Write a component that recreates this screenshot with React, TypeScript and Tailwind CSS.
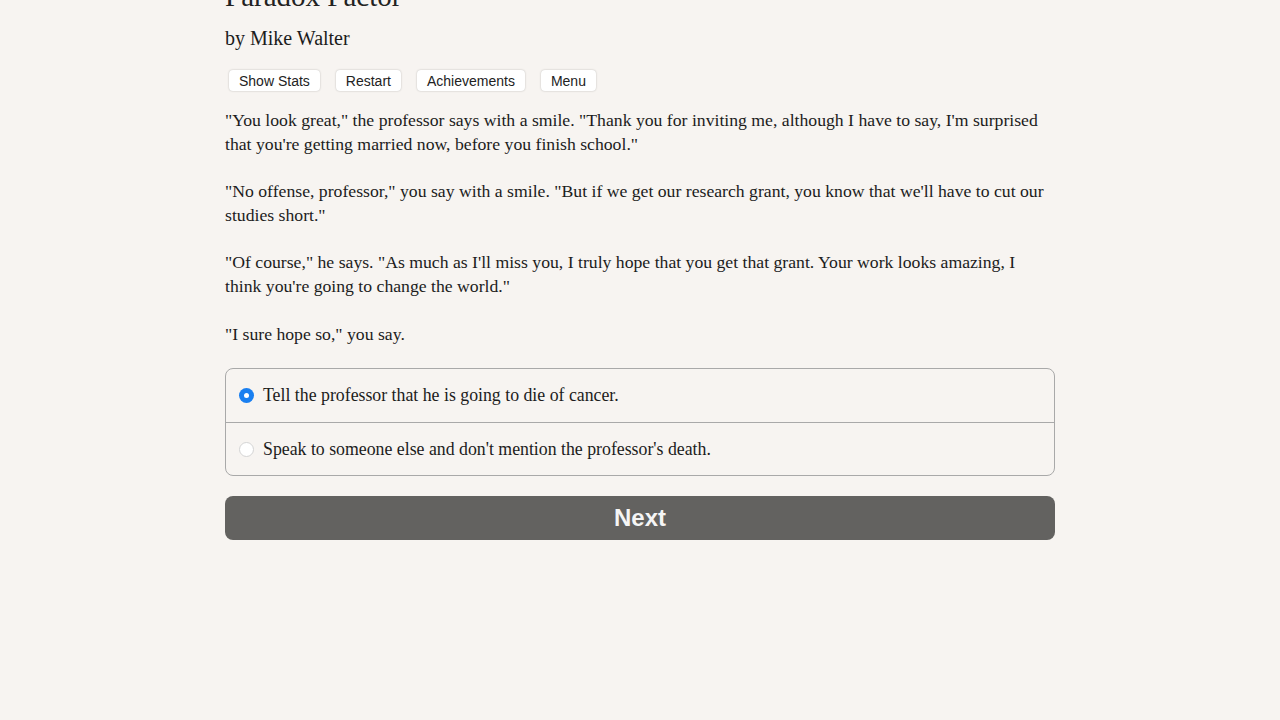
import { useState } from 'react';

const serif = { fontFamily: '"Liberation Serif", "DejaVu Serif", serif' };

const paragraphs = [
  '"You look great," the professor says with a smile. "Thank you for inviting me, although I have to say, I\'m surprised that you\'re getting married now, before you finish school."',
  '"No offense, professor," you say with a smile. "But if we get our research grant, you know that we\'ll have to cut our studies short."',
  '"Of course," he says. "As much as I\'ll miss you, I truly hope that you get that grant. Your work looks amazing, I think you\'re going to change the world."',
  '"I sure hope so," you say.',
];

const choices = [
  'Tell the professor that he is going to die of cancer.',
  "Speak to someone else and don't mention the professor's death.",
];

function TopButton({ label }: { label: string }) {
  return (
    <button className="h-[21px] rounded-[4px] bg-white px-[10px] text-[14px] leading-none text-[#222] shadow-[0_0_2px_rgba(0,0,0,0.25)] font-['Liberation_Sans',Arial,sans-serif]">
      {label}
    </button>
  );
}

export default function App() {
  const [selected, setSelected] = useState(0);

  return (
    <div className="min-h-[720px] w-full overflow-hidden bg-[#f7f4f1] text-[#1c1c1c]">
      <div className="mx-auto w-[830px]" style={serif}>
        <h1 className="-mt-[21px] text-[29px] leading-[34px] text-[#222]">Paradox Factor</h1>
        <p className="mt-[13px] text-[20px] leading-[24px]">by Mike Walter</p>

        <div className="mt-[20px] flex gap-[16px] pl-[4px]">
          <TopButton label="Show Stats" />
          <TopButton label="Restart" />
          <TopButton label="Achievements" />
          <TopButton label="Menu" />
        </div>

        <div className="mt-[18px] flex flex-col gap-[24px] text-[17.7px] leading-[23.6px]">
          {paragraphs.map((p) => (
            <p key={p}>{p}</p>
          ))}
        </div>

        <div className="mt-[22px] overflow-hidden rounded-[8px] border border-[#a9a9a9]">
          {choices.map((c, i) => (
            <label
              key={c}
              onClick={() => setSelected(i)}
              className={
                'flex h-[53px] cursor-pointer items-center gap-[9px] pl-[13px] text-[17.8px] ' +
                (i > 0 ? 'border-t border-[#a9a9a9]' : '')
              }
            >
              {selected === i ? (
                <span className="flex h-[15px] w-[15px] items-center justify-center rounded-full bg-[#1a7ff0]">
                  <span className="h-[5px] w-[5px] rounded-full bg-white" />
                </span>
              ) : (
                <span className="h-[15px] w-[15px] rounded-full border border-[#d4d4d4] bg-white" />
              )}
              <span>{c}</span>
            </label>
          ))}
        </div>

        <button className="mt-[20px] flex h-[44px] w-full items-center justify-center rounded-[8px] bg-[#636260] text-[24px] font-bold text-[#f5f5f5] font-['Liberation_Sans',Arial,sans-serif]">
          Next
        </button>
      </div>
    </div>
  );
}
